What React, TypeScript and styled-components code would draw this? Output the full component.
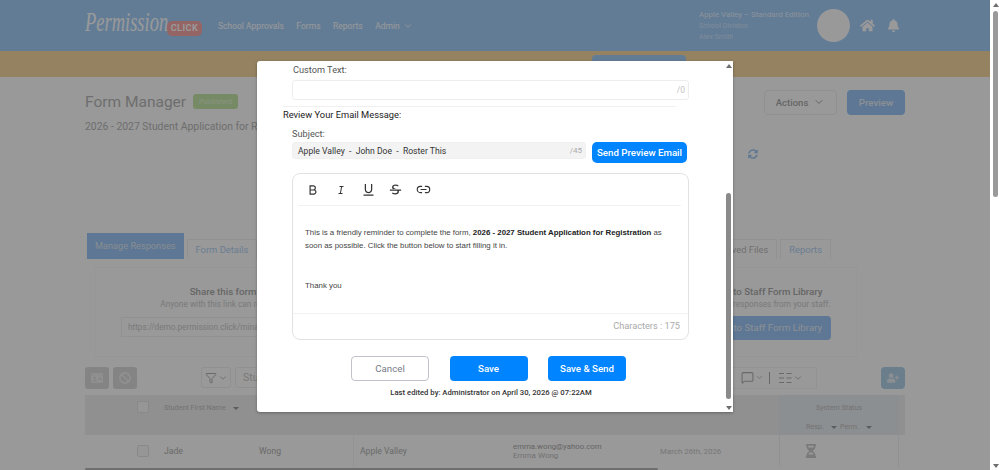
import React from "react";
import styled, { createGlobalStyle } from "styled-components";
import { ChevronDown, Filter, Link2, MessageSquare } from "lucide-react";
import {
  FaBan,
  FaBell,
  FaHome,
  FaHourglassHalf,
  FaIdCard,
  FaSyncAlt,
  FaUserPlus,
} from "react-icons/fa";
import { RiBold, RiItalic, RiStrikethrough, RiUnderline } from "react-icons/ri";

const GlobalStyle = createGlobalStyle`
  * { box-sizing: border-box; }
  html, body { margin: 0; height: 100%; overflow: hidden; background: #fff; }
  body { font-family: Roboto, "Liberation Sans", sans-serif; }
`;

const Screen = styled.div`
  display: flex;
  width: 999px;
  height: 470px;
  overflow: hidden;
`;

const Page = styled.div`
  position: relative;
  width: 990px;
  height: 470px;
  overflow: hidden;
  background: #fff;
`;

/* page scrollbar */
const PageBar = styled.div`
  width: 9px;
  height: 470px;
  display: flex;
  flex-direction: column;
  align-items: center;
  justify-content: space-between;
  padding: 3px 0 2px 2px;
  background: #fff;
`;

const Arrow = styled.div<{ $down?: boolean }>`
  width: 0;
  height: 0;
  border-left: 3.5px solid transparent;
  border-right: 3.5px solid transparent;
  ${(p) => (p.$down ? "border-top" : "border-bottom")}: 4px solid #6e6e6e;
`;

const BarThumb = styled.div<{ $h: number; $mt: number }>`
  width: 5px;
  height: ${(p) => p.$h}px;
  margin-top: ${(p) => p.$mt}px;
  margin-bottom: auto;
  border-radius: 3px;
  background: #9a9a9a;
`;

const Header = styled.header`
  height: 51px;
  background: #a5cffb;
  padding: 0 90px 0 85px;
  display: flex;
  align-items: center;
`;

const Logo = styled.div`
  display: flex;
  align-items: flex-end;
  width: 133px;
  height: 36px;
  padding-bottom: 8px;
`;

const LogoScript = styled.span`
  width: 82px;
  font-family: "Liberation Serif", serif;
  font-style: italic;
  font-size: 28px;
  line-height: 32px;
  color: #fff;
  white-space: nowrap;
  transform: translateY(2px) scaleX(0.66);
  transform-origin: left;
`;

const LogoBadge = styled.span`
  width: 35px;
  height: 15px;
  border-radius: 5px;
  background: #f9a8a8;
  color: #fff;
  font-size: 9px;
  font-weight: 700;
  letter-spacing: 0.5px;
  text-align: center;
  line-height: 15px;
`;

const Nav = styled.nav`
  display: flex;
  align-items: center;
  gap: 12.5px;
  flex: 1;
`;

const NavItem = styled.a`
  display: flex;
  align-items: center;
  gap: 3px;
  font-size: 8.5px;
  color: #fff;
`;

const Account = styled.div`
  width: 118px;
  display: flex;
  flex-direction: column;
  font-size: 7.2px;
  line-height: 11px;
  color: rgba(255, 255, 255, 0.5);
`;

const AccountTitle = styled.span`
  color: rgba(255, 255, 255, 0.75);
  font-size: 7.9px;
  white-space: nowrap;
`;

const Avatar = styled.div`
  width: 33px;
  height: 33px;
  border-radius: 50%;
  background: #fff;
  margin-right: 10px;
`;

const HeaderIcons = styled.div`
  display: flex;
  align-items: center;
  gap: 12px;
  color: #fff;
`;

const Band = styled.div`
  height: 26px;
  background: #f7d9a0;
  padding: 4px 304px 0 592px;
`;

const BandButton = styled.div`
  height: 22px;
  border-radius: 4px;
  background: #a5cffb;
`;

const Content = styled.main`
  padding: 13px 85px 0;
`;

const TitleRow = styled.div`
  display: flex;
  align-items: center;
  height: 24px;
`;

const Title = styled.h1`
  margin: 0;
  font-size: 15.5px;
  font-weight: 400;
  color: #b8b8b8;
`;

const Published = styled.span`
  margin-left: 7px;
  width: 45px;
  height: 15px;
  margin-bottom: 2px;
  border-radius: 3px;
  background: #c5e8a8;
  color: #e4f4d8;
  font-size: 7.5px;
  text-align: center;
  line-height: 15px;
`;

const Actions = styled.div`
  margin-left: auto;
  display: flex;
  gap: 10px;
`;

const ActionsButton = styled.div`
  width: 73px;
  height: 25px;
  border: 1px solid #f0f0f0;
  border-radius: 4px;
  display: flex;
  align-items: center;
  justify-content: center;
  gap: 5px;
  font-size: 9.6px;
  font-weight: 500;
  color: #aaa;
`;

const PreviewButton = styled.div`
  width: 58px;
  height: 25px;
  border-radius: 4px;
  background: #9cc6f7;
  color: #e8f0f8;
  font-size: 9.8px;
  font-weight: 500;
  text-align: center;
  line-height: 25px;
`;

const Subtitle = styled.div`
  margin-top: 3px;
  height: 20px;
  font-size: 10.4px;
  line-height: 20px;
  color: #b8b8b8;
`;

const RefreshRow = styled.div`
  height: 95px;
  padding: 12px 0 0 663px;
  color: #a0c8f4;
  font-size: 10px;
`;

const Tabs = styled.div`
  display: flex;
  align-items: flex-end;
  height: 27px;
  padding: 0 74px 0 2px;
  gap: 3px;
`;

const Tab = styled.div<{ $active?: boolean; $push?: boolean }>`
  height: ${(p) => (p.$active ? 26 : 20)}px;
  padding: 0 8px;
  margin-left: ${(p) => (p.$push ? "auto" : "0")};
  font-size: ${(p) => (p.$active ? 9.2 : 9.4)}px;
  line-height: ${(p) => (p.$active ? 25 : 20)}px;
  color: ${(p) => (p.$active ? "#e0eaf4" : "#b2d2f4")};
  background: ${(p) => (p.$active ? "#9cc6f7" : "transparent")};
  border: ${(p) => (p.$active ? "0" : "1px solid #f2f2f2")};
  border-bottom: 0;
  white-space: nowrap;
`;

const GrayTab = styled(Tab)`
  color: #bbb;
`;

const SharePanel = styled.section`
  margin: 8px 48px 0 10px;
  height: 90px;
  padding: 17px 25px 0;
  display: flex;
  justify-content: space-between;
  border: 1px solid #fbfbfb;
  text-align: center;
`;

const ShareBlock = styled.div<{ $w: number }>`
  width: ${(p) => p.$w}px;
  display: flex;
  flex-direction: column;
  align-items: center;
  white-space: nowrap;
`;

const ShareTitle = styled.div`
  font-size: 9.7px;
  font-weight: 500;
  line-height: 13px;
  color: #aaa;
`;

const ShareHint = styled.div`
  font-size: 8.3px;
  line-height: 12px;
  color: #ccc;
`;

const ShareInput = styled.div`
  margin-top: 7px;
  width: 204px;
  height: 20px;
  padding-left: 6px;
  border: 1px solid #f2f2f2;
  font-size: 8.2px;
  line-height: 18px;
  text-align: left;
  color: #ccc;
`;

const ShareButton = styled.div`
  margin-top: 6px;
  width: 126px;
  height: 24px;
  border-radius: 4px;
  background: #9cc6f7;
  color: #e8f0f8;
  font-size: 9.7px;
  line-height: 24px;
`;

const Toolbar = styled.div`
  margin-top: 9px;
  display: flex;
  align-items: center;
  height: 23px;
`;

const GrayButton = styled.div`
  width: 24px;
  height: 22px;
  margin: 0 4px 0 0;
  border-radius: 3px;
  background: #dcdcdc;
  color: #f2f2f2;
  display: flex;
  align-items: center;
  justify-content: center;
  font-size: 12px;
`;

const FilterBox = styled.div`
  margin-left: 60px;
  width: 30px;
  height: 21px;
  border: 1px solid #f0f0f0;
  border-radius: 3px;
  display: flex;
  align-items: center;
  justify-content: center;
  gap: 1px;
  color: #b0b0b0;
`;

const SearchBox = styled.div`
  margin-left: 4px;
  width: 150px;
  height: 21px;
  padding-left: 7px;
  border: 1px solid #f0f0f0;
  border-radius: 3px;
  font-size: 10.5px;
  line-height: 19px;
  color: #ccc;
`;

const ViewBox = styled.div`
  margin-left: auto;
  width: 90px;
  height: 22px;
  padding-left: 13px;
  display: flex;
  align-items: center;
  gap: 1px;
  border: 1px solid #f4f4f4;
  color: #b0b0b0;
`;

const ViewDivider = styled.span`
  width: 1px;
  height: 12px;
  margin: 0 8px 0 4px;
  background: #aaa;
`;

const AddUser = styled.div`
  margin-left: 64px;
  width: 24px;
  height: 22px;
  border-radius: 4px;
  background: #b2d2e8;
  color: #e8eef4;
  display: flex;
  align-items: center;
  justify-content: center;
  font-size: 12px;
`;

const columns = "52px 27px 95px 101px 153px 147px 119px 120px 6px";

const TableHead = styled.div`
  margin-top: 6px;
  height: 40px;
  display: grid;
  grid-template-columns: ${columns};
  background: #f0f0f0;
  font-size: 7.2px;
  color: #c0c0c0;
`;

const HeadCell = styled.div<{ $col?: number }>`
  grid-column: ${(p) => p.$col ?? "auto"};
  padding-top: 6px;
  line-height: 13px;
  white-space: nowrap;
`;

const StatusHead = styled.div`
  grid-column: 8;
  background: #eaeef2;
  display: flex;
  flex-direction: column;
  align-items: center;
  padding-top: 7px;
  line-height: 12px;
  gap: 7px;
`;

const SortRow = styled.div`
  display: flex;
  align-items: center;
  gap: 3px;
`;

const Caret = styled.span`
  display: inline-block;
  margin-left: 7px;
  width: 0;
  height: 0;
  vertical-align: middle;
  border-left: 3px solid transparent;
  border-right: 3px solid transparent;
  border-top: 3.5px solid #999;
`;

const CheckBox = styled.div`
  width: 12px;
  height: 12px;
  border: 1px solid #e4e4e4;
  border-radius: 2px;
  background: #fafafa;
`;

const TableRow = styled.div`
  height: 33px;
  padding-bottom: 1px;
  display: grid;
  grid-template-columns: ${columns};
  align-items: center;
  font-size: 8.6px;
  color: #b0b0b0;
`;

const RowCell = styled.div<{ $col: number }>`
  grid-column: ${(p) => p.$col};
  white-space: nowrap;
`;

const SchoolCell = styled(RowCell)`
  align-self: stretch;
  display: flex;
  align-items: center;
  margin-left: -7px;
  padding-left: 6px;
  border-left: 1px solid #f6f6f6;
`;

const EmailCell = styled(RowCell)`
  line-height: 9px;
  font-size: 7.8px;
  color: #aaa;
`;

const EmailName = styled.div`
  font-size: 8px;
  color: #c0c0c0;
`;

const DateCell = styled(RowCell)`
  font-size: 7.9px;
  color: #c8c8c8;
`;

const StatusCell = styled(RowCell)`
  align-self: stretch;
  display: flex;
  align-items: center;
  padding-left: 24px;
  border-left: 1px solid #eef2f6;
  border-right: 1px solid #eef2f6;
  color: #ccc;
  font-size: 14px;
`;

const TableScroll = styled.div`
  height: 2px;
  width: 573px;
  background: #b8b8b8;
  border-radius: 1px;
`;

const Overlay = styled.div`
  position: absolute;
  inset: 0;
  background: rgba(0, 0, 0, 0.4);
`;

const Modal = styled.div`
  position: absolute;
  left: 257px;
  top: 61px;
  width: 476px;
  height: 351px;
  border-radius: 3px 0 0 3px;
  background: #fff;
  overflow: hidden;
  box-shadow: 0 1px 3px rgba(0, 0, 0, 0.3);
`;

const ModalBody = styled.div`
  width: 468px;
  padding: 2px 0 0 26px;
`;

const FieldBlock = styled.div`
  padding-left: 9px;
`;

const FieldLabel = styled.div`
  height: 13px;
  padding-left: 1px;
  font-size: 9.2px;
  line-height: 13px;
  color: #555;
`;

const TextField = styled.div`
  margin-top: 4px;
  width: 397px;
  height: 20px;
  padding-right: 3px;
  border: 1px solid #ededed;
  border-radius: 3px;
  font-size: 8.5px;
  line-height: 19px;
  text-align: right;
  color: #c4c4c4;
`;

const SoftRule = styled.div`
  margin-top: 6px;
  width: 393px;
  height: 1px;
  background: #f0f0f0;
`;

const SectionTitle = styled.div`
  margin-top: 2px;
  height: 12px;
  font-size: 9.3px;
  line-height: 12px;
  color: #222;
`;

const SubjectLabel = styled(FieldLabel)`
  margin-top: 6px;
  padding-left: 0;
`;

const SubjectRow = styled.div`
  margin-top: 2px;
  display: flex;
  gap: 6px;
  align-items: flex-start;
`;

const SubjectField = styled.div`
  width: 294px;
  height: 17px;
  padding: 0 3px 0 5px;
  display: flex;
  justify-content: space-between;
  border: 1px solid #f0f0f0;
  border-radius: 3px;
  background: #f3f3f3;
  font-size: 8.6px;
  line-height: 16px;
  color: #333;
  white-space: pre;
`;

const SubjectCount = styled.span`
  font-size: 8px;
  color: #aaa;
`;

const PreviewEmail = styled.button`
  width: 95px;
  height: 21px;
  padding: 0;
  border: 0;
  border-radius: 5px;
  background: #0084ff;
  color: #fff;
  font: 500 9.7px Roboto, sans-serif;
  white-space: nowrap;
`;

const Editor = styled.div`
  margin-top: 10px;
  width: 397px;
  height: 167px;
  display: flex;
  flex-direction: column;
  border: 1px solid #e2e2e2;
  border-radius: 8px;
`;

const EditorTools = styled.div`
  margin: 0 7px 0 5px;
  height: 32px;
  padding-left: 7px;
  display: flex;
  align-items: center;
  gap: 11.5px;
  border-bottom: 1px solid #f2f2f2;
  color: #333;
`;

const ToolSlot = styled.span`
  width: 16px;
  display: flex;
  justify-content: center;
`;

const EditorText = styled.div`
  flex: 1;
  padding: 20px 16px 0 12px;
  font-family: "Liberation Sans", Arial, sans-serif;
  font-size: 7.85px;
  line-height: 13px;
  color: #444;
`;

const EditorStrong = styled.b`
  color: #222;
`;

const EditorThanks = styled.p`
  margin: 27px 0 0;
`;

const EditorFooter = styled.div`
  height: 26px;
  padding-right: 8px;
  border-top: 1px solid #f2f2f2;
  text-align: right;
  font-size: 9.2px;
  line-height: 24px;
  color: #aaa;
`;

const ButtonRow = styled.div`
  margin: 16px 0 0;
  display: flex;
  gap: 20.5px;
  padding-left: 68px;
`;

const BaseButton = styled.button`
  width: 78px;
  height: 25px;
  padding: 0;
  border-radius: 4px;
  font: 500 9.7px Roboto, sans-serif;
`;

const CancelButton = styled(BaseButton)`
  border: 1.5px solid #c2c2cc;
  background: #fff;
  color: #777a88;
  font-weight: 400;
`;

const SaveButton = styled(BaseButton)`
  border: 0;
  background: #0084ff;
  color: #fff;
`;

const LastEdited = styled.div`
  margin-top: 6px;
  width: 416px;
  text-align: center;
  font-size: 7.7px;
  font-weight: 500;
  line-height: 12px;
  color: #333;
`;

const ModalBar = styled.div`
  position: absolute;
  top: 0;
  right: 0;
  width: 8px;
  height: 100%;
  padding: 3px 1px 2px 0;
  display: flex;
  flex-direction: column;
  align-items: center;
  justify-content: space-between;
`;

const ModalThumb = styled(BarThumb)`
  background: #8a8a8a;
`;

const ListIcon = () => (
  <svg width="13" height="12" viewBox="0 0 13 12" fill="none" stroke="currentColor" strokeWidth="1.2">
    <path d="M0 1.5h5M7.5 1.5h5M0 6h5M7.5 6h5M0 10.5h5M7.5 10.5h5" />
  </svg>
);

const App = () => {
  return (
    <Screen>
      <GlobalStyle />
      <Page>
        <Header>
          <Logo>
            <LogoScript>Permission</LogoScript>
            <LogoBadge>CLICK</LogoBadge>
          </Logo>
          <Nav>
            <NavItem>School Approvals</NavItem>
            <NavItem>Forms</NavItem>
            <NavItem>Reports</NavItem>
            <NavItem>
              Admin <ChevronDown size={10} />
            </NavItem>
          </Nav>
          <Account>
            <AccountTitle>Apple Valley – Standard Edition</AccountTitle>
            <span>School Division</span>
            <span>Alex Smith</span>
          </Account>
          <Avatar />
          <HeaderIcons>
            <FaHome size={15} />
            <FaBell size={13} />
          </HeaderIcons>
        </Header>
        <Band>
          <BandButton />
        </Band>
        <Content>
          <TitleRow>
            <Title>Form Manager</Title>
            <Published>Published</Published>
            <Actions>
              <ActionsButton>
                Actions <ChevronDown size={12} />
              </ActionsButton>
              <PreviewButton>Preview</PreviewButton>
            </Actions>
          </TitleRow>
          <Subtitle>2026 - 2027 Student Application for Registration</Subtitle>
          <RefreshRow>
            <FaSyncAlt />
          </RefreshRow>
          <Tabs>
            <Tab $active>Manage Responses</Tab>
            <Tab>Form Details</Tab>
            <GrayTab $push>Received Files</GrayTab>
            <Tab>Reports</Tab>
          </Tabs>
          <SharePanel>
            <ShareBlock $w={204}>
              <ShareTitle>Share this form</ShareTitle>
              <ShareHint>Anyone with this link can respond.</ShareHint>
              <ShareInput>https://demo.permission.click/mina8</ShareInput>
            </ShareBlock>
            <ShareBlock $w={126}>
              <ShareTitle>Add to Staff Form Library</ShareTitle>
              <ShareHint>Collect responses from your staff.</ShareHint>
              <ShareButton>Add to Staff Form Library</ShareButton>
            </ShareBlock>
          </SharePanel>
          <Toolbar>
            <GrayButton>
              <FaIdCard />
            </GrayButton>
            <GrayButton>
              <FaBan />
            </GrayButton>
            <FilterBox>
              <Filter size={12} />
              <ChevronDown size={10} />
            </FilterBox>
            <SearchBox>Student</SearchBox>
            <ViewBox>
              <MessageSquare size={13} />
              <ChevronDown size={9} />
              <ViewDivider />
              <ListIcon />
              <ChevronDown size={10} />
            </ViewBox>
            <AddUser>
              <FaUserPlus />
            </AddUser>
          </Toolbar>
          <TableHead>
            <HeadCell $col={2}>
              <CheckBox />
            </HeadCell>
            <HeadCell $col={3}>
              Student First Name
              <Caret />
            </HeadCell>
            <StatusHead>
              System Status
              <SortRow>
                <span>
                  Resp.
                  <Caret />
                </span>
                <span>
                  Perm.
                  <Caret />
                </span>
              </SortRow>
            </StatusHead>
          </TableHead>
          <TableRow>
            <RowCell $col={2}>
              <CheckBox />
            </RowCell>
            <RowCell $col={3}>Jade</RowCell>
            <RowCell $col={4}>Wong</RowCell>
            <SchoolCell $col={5}>Apple Valley</SchoolCell>
            <EmailCell $col={6}>
              emma.wong@yahoo.com
              <EmailName>Emma Wong</EmailName>
            </EmailCell>
            <DateCell $col={7}>March 26th, 2026</DateCell>
            <StatusCell $col={8}>
              <FaHourglassHalf />
            </StatusCell>
          </TableRow>
          <TableScroll />
        </Content>
        <Overlay />
        <Modal>
          <ModalBody>
            <FieldBlock>
              <FieldLabel>Custom Text:</FieldLabel>
              <TextField>/0</TextField>
            </FieldBlock>
            <SoftRule />
            <SectionTitle>Review Your Email Message:</SectionTitle>
            <FieldBlock>
              <SubjectLabel>Subject:</SubjectLabel>
              <SubjectRow>
                <SubjectField>
                  <span>Apple Valley  -  John Doe  -  Roster This</span>
                  <SubjectCount>/45</SubjectCount>
                </SubjectField>
                <PreviewEmail>Send Preview Email</PreviewEmail>
              </SubjectRow>
              <Editor>
                <EditorTools>
                  <ToolSlot>
                    <RiBold size={14} />
                  </ToolSlot>
                  <ToolSlot>
                    <RiItalic size={12} />
                  </ToolSlot>
                  <ToolSlot>
                    <RiUnderline size={15} />
                  </ToolSlot>
                  <ToolSlot>
                    <RiStrikethrough size={15} />
                  </ToolSlot>
                  <ToolSlot>
                    <Link2 size={15} strokeWidth={1.8} />
                  </ToolSlot>
                </EditorTools>
                <EditorText>
                  This is a friendly reminder to complete the form,{" "}
                  <EditorStrong>2026 - 2027 Student Application for Registration</EditorStrong> as
                  soon as possible. Click the button below to start filling it in.
                  <EditorThanks>Thank you</EditorThanks>
                </EditorText>
                <EditorFooter>Characters : 175</EditorFooter>
              </Editor>
            </FieldBlock>
            <ButtonRow>
              <CancelButton>Cancel</CancelButton>
              <SaveButton>Save</SaveButton>
              <SaveButton>Save &amp; Send</SaveButton>
            </ButtonRow>
            <LastEdited>Last edited by: Administrator on April 30, 2026 @ 07:22AM</LastEdited>
          </ModalBody>
          <ModalBar>
            <Arrow />
            <ModalThumb $h={206} $mt={125} />
            <Arrow $down />
          </ModalBar>
        </Modal>
      </Page>
      <PageBar>
        <Arrow />
        <BarThumb $h={186} $mt={4} />
        <Arrow $down />
      </PageBar>
    </Screen>
  );
};

export default App;
